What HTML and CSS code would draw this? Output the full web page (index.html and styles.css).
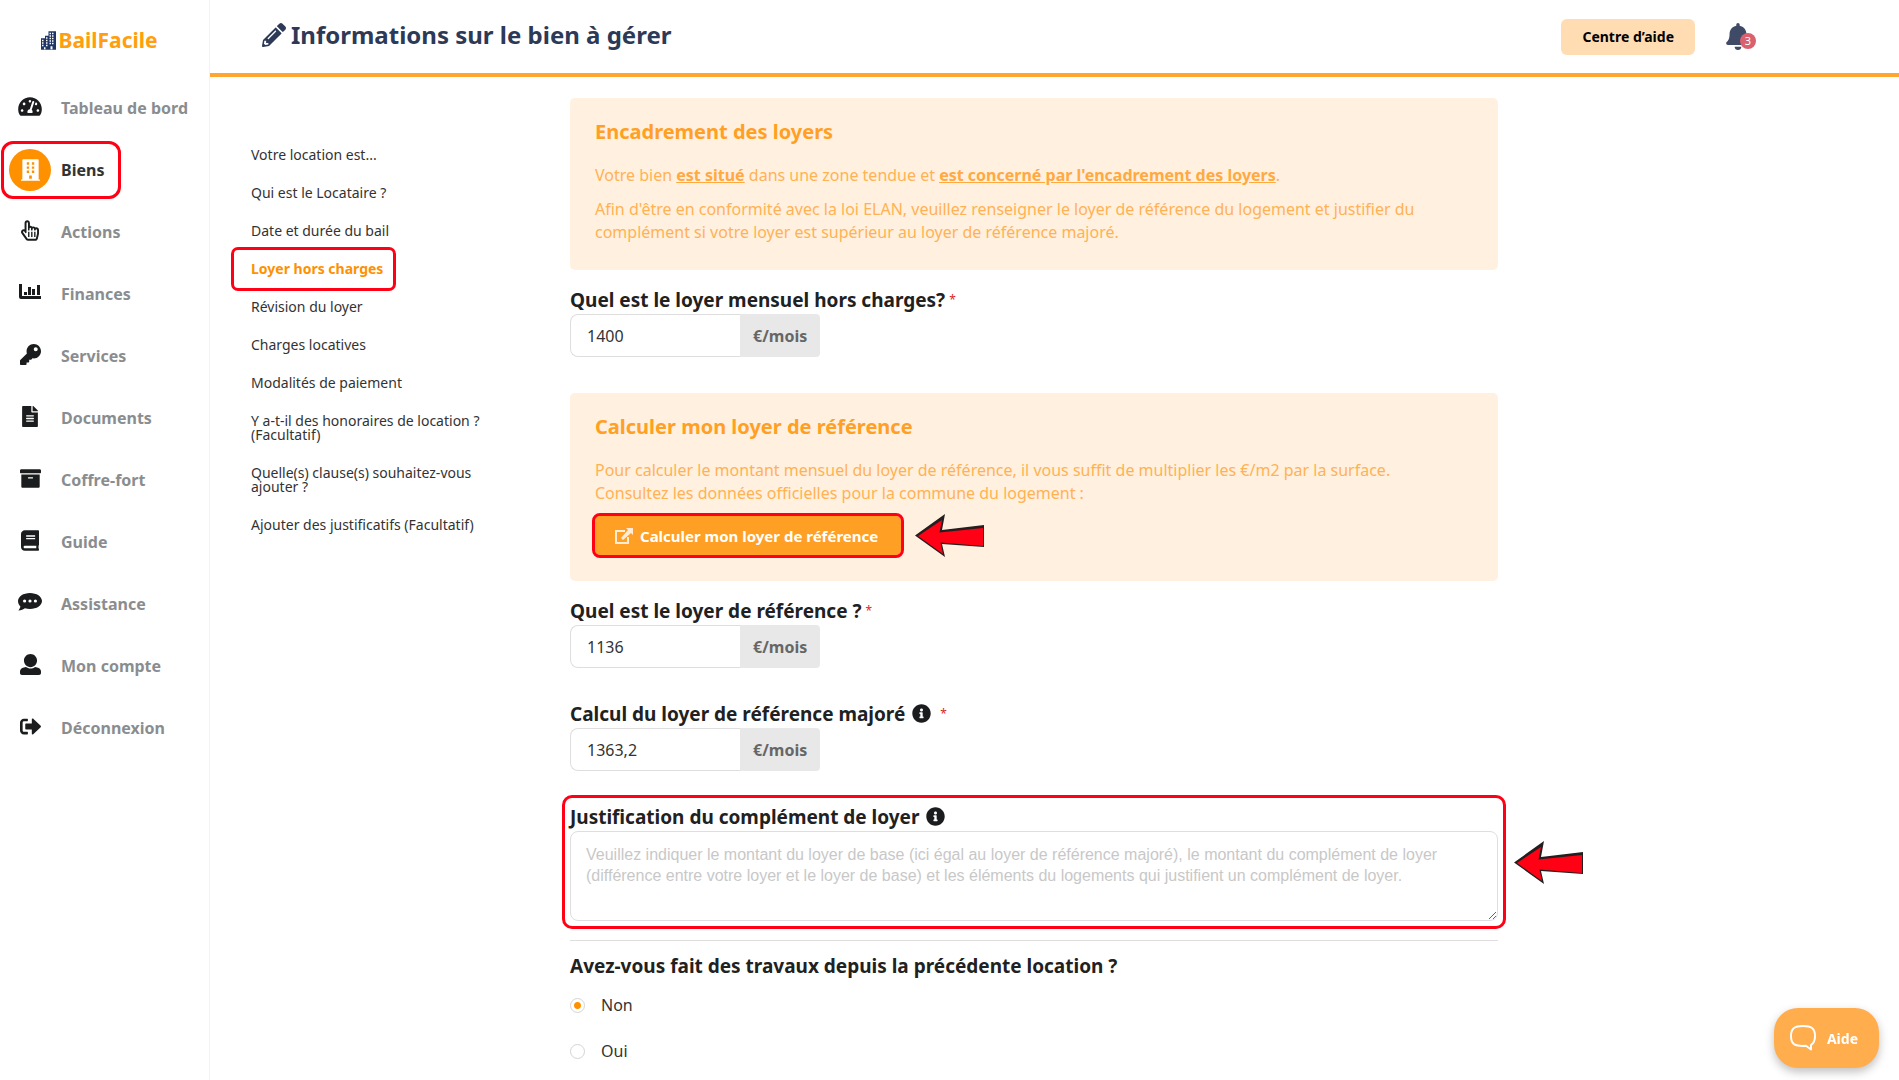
FILE: index.html
```html
<!DOCTYPE html>
<html lang="fr">
<head>
<meta charset="utf-8">
<meta name="viewport" content="width=device-width, initial-scale=1">
<title>BailFacile – Informations sur le bien à gérer</title>
<link rel="stylesheet" href="styles.css">
</head>
<body>
<div class="app">
  <aside class="sidebar">
    <a class="logo" href="#">
      <svg class="logo-icon" viewBox="0 0 30 37" aria-hidden="true"><path fill="#1f3566" fill-rule="evenodd" d="M0 14h8V9h7V0h15v37H0zM2 17v3h3v-3zM2 22v3h3v-3zM2 27v3h3v-3zM10 12v3h3v-3zM10 17v3h3v-3zM10 22v3h3v-3zM10 27v3h3v-3zM17 3v3h3V3zM22 3v3h3V3zM17 8v3h3V8zM22 8v3h3V8zM17 13v3h3v-3zM22 13v3h3v-3zM17 18v3h3v-3zM22 18v3h3v-3zM17 23v3h3v-3zM22 23v3h3v-3zM6 32v4h3v-4zM19 30v6h4v-6z"/></svg>
      <span>BailFacile</span>
    </a>
    <nav class="menu" aria-label="Menu principal">
      <a class="menu-item" href="#"><span class="menu-icon"><svg viewBox="0 0 576 512" width="24" height="21"><path d="M288 32C128.94 32 0 160.94 0 320c0 52.8 14.25 102.26 39.06 144.8 5.61 9.62 16.3 15.2 27.44 15.2h443c11.14 0 21.83-5.58 27.44-15.2C561.75 422.26 576 372.8 576 320c0-159.06-128.94-288-288-288zm0 64c14.71 0 26.58 10.13 30.32 23.65-1.11 2.26-2.64 4.23-3.45 6.67l-9.22 27.67c-5.13 3.49-10.97 6.01-17.64 6.01-17.67 0-32-14.33-32-32S270.33 96 288 96zM96 384c-17.67 0-32-14.33-32-32s14.33-32 32-32 32 14.33 32 32-14.33 32-32 32zm48-160c-17.67 0-32-14.33-32-32s14.33-32 32-32 32 14.33 32 32-14.33 32-32 32zm246.77-72.41l-61.33 184C343.13 347.33 352 364.54 352 384c0 11.72-3.38 22.55-8.88 32H232.88c-5.5-9.45-8.88-20.28-8.88-32 0-33.94 26.5-61.43 59.9-63.59l61.34-184.01c4.17-12.56 17.73-19.45 30.36-15.17 12.57 4.19 19.35 17.79 15.17 30.36zm14.66 57.2l15.52-46.55c3.47-1.29 7.13-2.23 11.05-2.23 17.67 0 32 14.33 32 32s-14.33 32-32 32c-11.38-.01-20.89-6.28-26.57-15.22zM480 384c-17.67 0-32-14.33-32-32s14.33-32 32-32 32 14.33 32 32-14.33 32-32 32z"/></svg></span>Tableau de bord</a>
      <a class="menu-item menu-item-active" href="#" aria-current="page"><span class="menu-icon"><svg viewBox="0 0 448 512" width="19" height="22"><path fill-rule="evenodd" d="M436 480h-20V24c0-13.255-10.745-24-24-24H56C42.745 0 32 10.745 32 24v456H12c-6.627 0-12 5.373-12 12v20h448v-20c0-6.627-5.373-12-12-12zM136 76h56v56h-56zM256 76h56v56h-56zM136 172h56v56h-56zM256 172h56v56h-56zM136 268h56v56h-56zM256 268h56v56h-56zM192 384h64v80h-64z"/></svg></span>Biens</a>
      <a class="menu-item" href="#"><span class="menu-icon"><svg viewBox="0 0 448 512" width="18" height="21"><path d="M358.182 179.361c-19.493-24.768-52.679-31.945-79.872-19.098-15.127-15.687-36.182-22.487-56.595-19.629V67c0-36.944-29.736-67-66.286-67S89.143 30.056 89.143 67v161.129c-19.909-7.41-43.272-5.094-62.083 8.872-29.355 21.795-35.793 63.333-14.55 93.152l109.699 154.001C134.632 501.59 154.741 512 176 512h178.286c30.802 0 57.574-21.5 64.557-51.797l27.429-118.999A67.873 67.873 0 0 0 448 326v-84c0-46.844-46.625-79.273-89.818-62.639zM80.985 279.697l27.126 38.079c8.995 12.626 29.031 6.287 29.031-9.283V67c0-25.12 36.571-25.16 36.571 0v175c0 8.836 7.163 16 16 16h6.857c8.837 0 16-7.164 16-16v-35c0-25.12 36.571-25.16 36.571 0v35c0 8.836 7.163 16 16 16H272c8.837 0 16-7.164 16-16v-21c0-25.12 36.571-25.16 36.571 0v21c0 8.836 7.163 16 16 16h6.857c8.837 0 16-7.164 16-16 0-25.121 36.571-25.16 36.571 0v84c0 1.488-.169 2.977-.502 4.423l-27.43 119.001c-1.978 8.582-9.29 14.576-17.782 14.576H176c-5.769 0-11.263-2.878-14.697-7.697l-109.712-154c-14.406-20.223 14.994-42.189 29.394-21.606zM176 288h34v128h-34zM252 288h34v128h-34zM327 288h34v128h-34z"/></svg></span>Actions</a>
      <a class="menu-item" href="#"><span class="menu-icon"><svg viewBox="0 0 22 16" width="22" height="16"><path d="M0 0h3v12h19v3H2a2 2 0 0 1-2-2zM5 8h3v3H5zM9 3h3v8H9zM13 5h3v6h-3zM18 1h3v10h-3z"/></svg></span>Finances</a>
      <a class="menu-item" href="#"><span class="menu-icon"><svg viewBox="0 0 512 512" width="21" height="21"><path d="M512 176.001C512 273.203 433.202 352 336 352c-11.22 0-22.19-1.062-32.827-3.069l-24.012 27.014A23.999 23.999 0 0 1 261.223 384H224v40c0 13.255-10.745 24-24 24h-40v40c0 13.255-10.745 24-24 24H24c-13.255 0-24-10.745-24-24v-78.059c0-6.365 2.529-12.47 7.029-16.971l161.802-161.802C163.108 213.814 160 195.271 160 176 160 78.798 238.797.001 335.999 0 433.488-.001 512 78.511 512 176.001zM336 128c0 26.51 21.49 48 48 48s48-21.49 48-48-21.49-48-48-48-48 21.49-48 48z"/></svg></span>Services</a>
      <a class="menu-item" href="#"><span class="menu-icon"><svg viewBox="0 0 384 512" width="16" height="21"><path d="M224 136V0H24C10.7 0 0 10.7 0 24v464c0 13.3 10.7 24 24 24h336c13.3 0 24-10.7 24-24V160H248c-13.2 0-24-10.8-24-24zm64 236c0 6.6-5.4 12-12 12H108c-6.6 0-12-5.4-12-12v-8c0-6.6 5.4-12 12-12h168c6.6 0 12 5.4 12 12v8zm0-64c0 6.6-5.4 12-12 12H108c-6.6 0-12-5.4-12-12v-8c0-6.6 5.4-12 12-12h168c6.6 0 12 5.4 12 12v8zm0-72v8c0 6.6-5.4 12-12 12H108c-6.6 0-12-5.4-12-12v-8c0-6.6 5.4-12 12-12h168c6.6 0 12 5.4 12 12zm96-114.1v6.1H256V0h6.1c6.4 0 12.5 2.5 17 7l97.9 98c4.5 4.5 7 10.6 7 16.9z"/></svg></span>Documents</a>
      <a class="menu-item" href="#"><span class="menu-icon"><svg viewBox="0 0 512 512" width="21" height="21"><path d="M32 448c0 17.7 14.3 32 32 32h384c17.7 0 32-14.3 32-32V160H32v288zm160-212c0-6.6 5.4-12 12-12h104c6.6 0 12 5.4 12 12v8c0 6.6-5.4 12-12 12H204c-6.6 0-12-5.4-12-12v-8zM480 32H32C14.3 32 0 46.3 0 64v48c0 8.8 7.2 16 16 16h480c8.8 0 16-7.2 16-16V64c0-17.7-14.3-32-32-32z"/></svg></span>Coffre-fort</a>
      <a class="menu-item" href="#"><span class="menu-icon"><svg viewBox="0 0 448 512" width="18" height="21"><path d="M448 360V24c0-13.3-10.7-24-24-24H96C43 0 0 43 0 96v320c0 53 43 96 96 96h328c13.3 0 24-10.7 24-24v-16c0-7.5-3.5-14.3-8.9-18.7-4.2-15.4-4.2-59.3 0-74.7 5.4-4.3 8.9-11.1 8.9-18.6zM128 134c0-3.3 2.7-6 6-6h212c3.3 0 6 2.7 6 6v20c0 3.3-2.7 6-6 6H134c-3.3 0-6-2.7-6-6v-20zm0 64c0-3.3 2.7-6 6-6h212c3.3 0 6 2.7 6 6v20c0 3.3-2.7 6-6 6H134c-3.3 0-6-2.7-6-6v-20zm253.4 250H96c-17.7 0-32-14.3-32-32 0-17.6 14.4-32 32-32h285.4c-1.9 17.1-1.9 46.9 0 64z"/></svg></span>Guide</a>
      <a class="menu-item" href="#"><span class="menu-icon"><svg viewBox="0 0 24 18" width="24" height="18"><path fill-rule="evenodd" d="M12 0c6.6 0 12 3.600 12 8s-5.400 8-12 8c-1.800 0-3.600-.3-5.100-.8C5.500 16.300 3.300 17.500.4 17.500c1-1.200 1.800-2.500 2-4C.9 12 0 10.100 0 8c0-4.400 5.400-8 12-8zM5 8a1.600 1.600 0 1 0 3.200 0A1.600 1.600 0 1 0 5 8zm5.400 0a1.600 1.600 0 1 0 3.200 0 1.600 1.600 0 1 0-3.200 0zm5.400 0a1.600 1.600 0 1 0 3.200 0 1.600 1.600 0 1 0-3.200 0z"/></svg></span>Assistance</a>
      <a class="menu-item" href="#"><span class="menu-icon"><svg viewBox="0 0 512 512" width="21" height="21"><path d="M256 0c88.366 0 160 71.634 160 160s-71.634 160-160 160S96 248.366 96 160 167.634 0 256 0zm183.283 333.821l-71.313-17.828c-74.923 53.89-165.738 41.864-223.94 0l-71.313 17.828C29.981 344.505 0 382.903 0 426.955V464c0 26.51 21.49 48 48 48h416c26.51 0 48-21.49 48-48v-37.045c0-44.052-29.981-82.45-72.717-93.134z"/></svg></span>Mon compte</a>
      <a class="menu-item" href="#"><span class="menu-icon"><svg viewBox="0 0 512 512" width="21" height="21"><path d="M504 273L329 441c-15 15-41 4.500-41-17v-96H152c-13.300 0-24-10.700-24-24v-96c0-13.300 10.700-24 24-24h136V88c0-21.400 25.900-32 41-17l175 168c9.300 9.400 9.300 24.600 0 34zM192 436v-40c0-6.600-5.400-12-12-12H96c-17.700 0-32-14.300-32-32V160c0-17.700 14.300-32 32-32h84c6.600 0 12-5.400 12-12V76c0-6.600-5.400-12-12-12H96c-53 0-96 43-96 96v192c0 53 43 96 96 96h84c6.600 0 12-5.400 12-12z"/></svg></span>Déconnexion</a>
    </nav>
  </aside>

  <div class="main">
    <header class="topbar">
      <div class="heading">
        <svg class="pencil" viewBox="0 0 512 512" aria-hidden="true"><path d="M497.900 142.100l-46.100 46.100c-4.700 4.700-12.300 4.700-17 0l-111-111c-4.700-4.700-4.700-12.300 0-17l46.100-46.100c18.700-18.700 49.100-18.700 67.900 0l60.100 60.100c18.800 18.700 18.800 49.100 0 67.900zM284.200 99.800L21.600 362.400.4 483.900c-2.900 16.400 11.400 30.600 27.800 27.800l121.500-21.300 262.600-262.600c4.700-4.700 4.700-12.300 0-17l-111-111c-4.800-4.700-12.400-4.700-17.100 0zM124.100 339.900c-5.500-5.500-5.500-14.300 0-19.800l154-154c5.500-5.500 14.300-5.500 19.800 0s5.500 14.300 0 19.800l-154 154c-5.500 5.500-14.300 5.500-19.800 0zM88 424h48v36.300l-64.500 11.300-31.100-31.100L51.700 376H88v48z"/></svg>
        <h1 class="title">Informations sur le bien à gérer</h1>
      </div>
      <button class="help-center" type="button">Centre d’aide</button>
      <button class="notifications" type="button" aria-label="Notifications">
        <svg viewBox="0 0 448 512" width="24" height="27"><path d="M439.390 362.290c-19.320-20.760-55.470-51.990-55.470-154.290 0-77.700-54.480-139.900-127.940-155.160V32c0-17.670-14.320-32-31.980-32s-31.980 14.330-31.980 32v20.840C118.560 68.100 64.080 130.300 64.080 208c0 102.300-36.150 133.530-55.470 154.290-6 6.450-8.660 14.160-8.610 21.710.11 16.400 12.980 32 32.100 32h383.800c19.120 0 32-15.600 32.100-32 .05-7.550-2.610-15.270-8.610-21.710zM224 512c35.320 0 63.970-28.650 63.970-64H160.030c0 35.350 28.650 64 63.970 64z"/></svg>
        <span class="badge">3</span>
      </button>
    </header>

    <div class="content">
      <nav class="steps" aria-label="Étapes">
        <a class="step" href="#">Votre location est...</a>
        <a class="step" href="#">Qui est le Locataire ?</a>
        <a class="step" href="#">Date et durée du bail</a>
        <a class="step step-active" href="#" aria-current="step">Loyer hors charges</a>
        <a class="step" href="#">Révision du loyer</a>
        <a class="step" href="#">Charges locatives</a>
        <a class="step" href="#">Modalités de paiement</a>
        <a class="step" href="#">Y a-t-il des honoraires de location ? (Facultatif)</a>
        <a class="step" href="#">Quelle(s) clause(s) souhaitez-vous ajouter ?</a>
        <a class="step" href="#">Ajouter des justificatifs (Facultatif)</a>
      </nav>

      <form class="form">
        <section class="notice">
          <h2 class="notice-title">Encadrement des loyers</h2>
          <p class="notice-text">Votre bien <strong>est situé</strong> dans une zone tendue et <strong>est concerné par l'encadrement des loyers</strong>.</p>
          <p class="notice-text">Afin d'être en conformité avec la loi ELAN, veuillez renseigner le loyer de référence du logement et justifier du complément si votre loyer est supérieur au loyer de référence majoré.</p>
        </section>

        <div class="field">
          <label class="label" for="loyer">Quel est le loyer mensuel hors charges?<span class="required">*</span></label>
          <div class="amount"><input class="amount-input" id="loyer" type="text" value="1400"><span class="unit">€/mois</span></div>
        </div>

        <section class="notice">
          <h2 class="notice-title">Calculer mon loyer de référence</h2>
          <p class="notice-text">Pour calculer le montant mensuel du loyer de référence, il vous suffit de multiplier les €/m2 par la surface.<br>Consultez les données officielles pour la commune du logement :</p>
          <div class="compute-row">
            <button class="compute" type="button">
              <svg class="compute-icon" viewBox="0 0 18 16" aria-hidden="true"><path fill="none" stroke="currentColor" stroke-width="2" d="M10 3H1v12h12V9"/><path fill="currentColor" d="M11 0h7v7l-2-2-8 7-2-2 7-8z"/></svg>
              Calculer mon loyer de référence
            </button>
            <svg class="arrow" viewBox="0 0 70 44" aria-hidden="true"><path fill="#231f20" d="M0 21.500L30 0 27 16 69 11v22L27 30 30 43z"/><path fill="#ff0014" d="M3 22L27 6 24.500 18.500 68 14v18L25.500 28.500 28 40z"/></svg>
          </div>
        </section>

        <div class="field">
          <label class="label" for="reference">Quel est le loyer de référence ?<span class="required">*</span></label>
          <div class="amount"><input class="amount-input" id="reference" type="text" value="1136"><span class="unit">€/mois</span></div>
        </div>

        <div class="field">
          <label class="label" for="majore">Calcul du loyer de référence majoré <svg class="info" viewBox="0 0 512 512" aria-hidden="true"><path d="M256 8C119.043 8 8 119.083 8 256c0 136.997 111.043 248 248 248s248-111.003 248-248C504 119.083 392.957 8 256 8zm0 110c23.196 0 42 18.804 42 42s-18.804 42-42 42-42-18.804-42-42 18.804-42 42-42zm56 254c0 6.627-5.373 12-12 12h-88c-6.627 0-12-5.373-12-12v-24c0-6.627 5.373-12 12-12h12v-64h-12c-6.627 0-12-5.373-12-12v-24c0-6.627 5.373-12 12-12h64c6.627 0 12 5.373 12 12v100h12c6.627 0 12 5.373 12 12v24z"/></svg> <span class="required">*</span></label>
          <div class="amount"><input class="amount-input" id="majore" type="text" value="1363,2"><span class="unit">€/mois</span></div>
        </div>

        <div class="justification">
          <label class="label" for="justification">Justification du complément de loyer <svg class="info" viewBox="0 0 512 512" aria-hidden="true"><path d="M256 8C119.043 8 8 119.083 8 256c0 136.997 111.043 248 248 248s248-111.003 248-248C504 119.083 392.957 8 256 8zm0 110c23.196 0 42 18.804 42 42s-18.804 42-42 42-42-18.804-42-42 18.804-42 42-42zm56 254c0 6.627-5.373 12-12 12h-88c-6.627 0-12-5.373-12-12v-24c0-6.627 5.373-12 12-12h12v-64h-12c-6.627 0-12-5.373-12-12v-24c0-6.627 5.373-12 12-12h64c6.627 0 12 5.373 12 12v100h12c6.627 0 12 5.373 12 12v24z"/></svg></label>
          <textarea class="textarea" id="justification" placeholder="Veuillez indiquer le montant du loyer de base (ici égal au loyer de référence majoré), le montant du complément de loyer (différence entre votre loyer et le loyer de base) et les éléments du logements qui justifient un complément de loyer."></textarea>
          <svg class="arrow arrow-side" viewBox="0 0 70 44" aria-hidden="true"><path fill="#231f20" d="M0 21.500L30 0 27 16 69 11v22L27 30 30 43z"/><path fill="#ff0014" d="M3 22L27 6 24.500 18.500 68 14v18L25.500 28.500 28 40z"/></svg>
        </div>

        <fieldset class="works">
          <legend class="label">Avez-vous fait des travaux depuis la précédente location ?</legend>
          <label class="choice"><input class="radio" type="radio" name="travaux" checked>Non</label>
          <label class="choice"><input class="radio" type="radio" name="travaux">Oui</label>
        </fieldset>
      </form>
    </div>
  </div>
</div>

<button class="chat" type="button">
  <svg viewBox="0 0 26 26" width="26" height="26" aria-hidden="true"><path fill="none" stroke="#fff" stroke-width="2" stroke-linejoin="round" d="M13 1c8 0 12 2 12 10 0 5-1.500 7.500-4 9v4.500l-5-3.700c-11 .7-15-1.300-15-9.800C1 3 5 1 13 1z"/></svg>
  Aide
</button>
</body>
</html>
```
FILE: styles.css
```css
* {
  box-sizing: border-box;
}

body {
  margin: 0;
  background: #fff;
  color: #212121;
  font-family: "Noto Sans", "Open Sans", sans-serif;
  font-size: 16px;
}

button,
input {
  font-family: inherit;
}

.app {
  display: flex;
  min-height: 100vh;
}

/* Sidebar */
.sidebar {
  flex: none;
  width: 210px;
  border-right: 1px solid #f3f3f3;
}

.logo {
  display: flex;
  align-items: center;
  justify-content: center;
  gap: 2px;
  height: 76px;
  padding: 4px 10px 0 0;
  color: #ff9f0f;
  font-size: 21px;
  font-weight: 700;
  line-height: 28px;
  text-decoration: none;
}

.logo-icon {
  width: 15px;
  height: 19px;
}

.menu {
  display: flex;
  flex-direction: column;
  gap: 20px;
  padding: 11px 9px;
}

.menu-item {
  display: flex;
  align-items: center;
  gap: 10px;
  height: 42px;
  color: #8a8d8f;
  font-weight: 700;
  text-decoration: none;
}

.menu-icon {
  display: flex;
  align-items: center;
  justify-content: center;
  width: 42px;
  height: 42px;
  padding-bottom: 4px;
  fill: #1b1c1d;
}

.menu-item-active {
  align-self: flex-start;
  padding-right: 9px;
  border-radius: 4px;
  outline: 3px solid #ff0014;
  outline-offset: 5px;
  color: #333;
}

.menu-item-active .menu-icon {
  padding: 0;
  border-radius: 50%;
  background: #ff9100;
  fill: #fff;
}

/* Top bar */
.main {
  flex: 1;
  min-width: 0;
}

.topbar {
  display: flex;
  align-items: center;
  height: 77px;
  padding: 0 143px 0 52px;
  border-bottom: 4px solid #ffa530;
}

.heading {
  display: flex;
  flex: 1;
  align-items: center;
  gap: 5px;
  padding-bottom: 4px;
}

.pencil {
  width: 24px;
  height: 24px;
  fill: #2c3a57;
}

.title {
  margin: 0;
  color: #2c3a57;
  font-size: 24px;
  font-weight: 700;
  line-height: 32px;
}

.help-center {
  height: 36px;
  padding: 0 21px;
  border: 0;
  border-radius: 6px;
  background: #ffdcb2;
  color: #000;
  font-size: 14px;
  font-weight: 700;
}

.notifications {
  position: relative;
  display: flex;
  margin-left: 31px;
  padding: 0 6px 0 0;
  border: 0;
  background: none;
  fill: #3f4a66;
}

.badge {
  position: absolute;
  top: 10px;
  left: 14px;
  width: 16px;
  height: 16px;
  border-radius: 50%;
  background: #d9606e;
  color: #fff;
  font-size: 11px;
  line-height: 16px;
}

/* Steps */
.content {
  display: flex;
  padding: 21px 32px 12px 24px;
}

.steps {
  display: flex;
  flex: none;
  flex-direction: column;
  align-items: flex-start;
  width: 336px;
  padding: 38px 64px 0 0;
}

.step {
  padding: 12px 10px 12px 17px;
  color: #333;
  font-size: 14px;
  line-height: 14px;
  text-decoration: none;
}

.step-active {
  border-radius: 4px;
  outline: 3px solid #ff0014;
  color: #ff9100;
  font-weight: 700;
}

/* Form */
.form {
  flex: 1;
  min-width: 0;
  max-width: 928px;
}

.notice {
  margin-bottom: 16px;
  padding: 20px 25px 15px;
  border-radius: 5px;
  background: #fff0e0;
}

.notice-title {
  margin: 0 0 18px;
  color: #ffa024;
  font-size: 20px;
  font-weight: 700;
  line-height: 28px;
}

.notice-text {
  margin: 0 0 11px;
  color: #ffb254;
  line-height: 23px;
}

.notice-text strong {
  color: #ffa940;
  text-decoration: underline;
}

.compute-row {
  display: flex;
  align-items: center;
  gap: 14px;
  margin-bottom: 11px;
}

.compute {
  display: flex;
  align-items: center;
  gap: 7px;
  height: 39px;
  padding: 0 23px 0 20px;
  border: 0;
  border-radius: 5px;
  outline: 3px solid #ff0014;
  background: #ffa024;
  color: #fff;
  font-size: 15px;
  font-weight: 700;
}

.compute-icon {
  width: 18px;
  height: 16px;
  opacity: 0.8;
}

.arrow {
  width: 70px;
  height: 44px;
}

.compute-row .arrow {
  margin: -3px 0;
}

.field {
  margin-bottom: 32px;
}

.field + .notice {
  margin-top: 36px;
}

.label {
  display: block;
  padding: 0;
  font-size: 19px;
  font-weight: 700;
  line-height: 28px;
}

.required {
  margin-left: 4px;
  color: #db2828;
  font-size: 12px;
  font-weight: 400;
  line-height: 14px;
  vertical-align: 3px;
}

.info {
  width: 19px;
  height: 19px;
  margin-left: 2px;
  fill: #1b1c1d;
  vertical-align: -2px;
}

.amount {
  display: flex;
  height: 43px;
}

.amount-input {
  width: 170px;
  padding: 0 16px;
  border: 1px solid #dedede;
  border-right: 0;
  border-radius: 8px 0 0 8px;
  color: #333;
  font-size: 16px;
}

.unit {
  display: flex;
  align-items: center;
  padding: 0 13px;
  border-radius: 0 4px 4px 0;
  background: #e8e8e8;
  color: #666;
  font-weight: 700;
}

.justification {
  position: relative;
  border-radius: 2px;
  outline: 3px solid #ff0014;
  outline-offset: 5px;
}

.textarea {
  display: block;
  width: 100%;
  height: 90px;
  padding: 12px 15px;
  border: 1px solid #dedede;
  border-radius: 8px;
  font-family: "Liberation Sans", Arial, sans-serif;
  font-size: 16px;
  line-height: 21px;
  resize: vertical;
}

.textarea::placeholder {
  color: #c8c8c8;
}

.arrow-side {
  position: absolute;
  top: 38px;
  left: calc(100% + 16px);
}

.works {
  margin: 19px 0 0;
  padding: 11px 0 0;
  border: 0;
  border-top: 1px solid #dedede;
}

.works .label {
  float: left;
  width: 100%;
  margin-bottom: 11px;
}

.choice {
  display: flex;
  clear: both;
  align-items: center;
  gap: 16px;
  margin-bottom: 18px;
  color: #333;
  line-height: 28px;
}

.choice:last-child {
  margin-bottom: 0;
}

.radio {
  width: 15px;
  height: 15px;
  margin: 0;
  border: 1px solid #d4d4d5;
  border-radius: 50%;
  appearance: none;
}

.radio:checked {
  background: radial-gradient(circle, #ff9100 0 3px, #fff 4px);
}

/* Chat launcher */
.chat {
  position: fixed;
  right: 20px;
  bottom: 12px;
  display: flex;
  align-items: center;
  gap: 11px;
  height: 60px;
  padding: 0 21px 0 16px;
  border: 0;
  border-radius: 24px;
  background: #ffad4d;
  box-shadow: 0 4px 10px rgba(0, 0, 0, 0.25);
  color: #fff;
  font-size: 14px;
  font-weight: 700;
}
```
